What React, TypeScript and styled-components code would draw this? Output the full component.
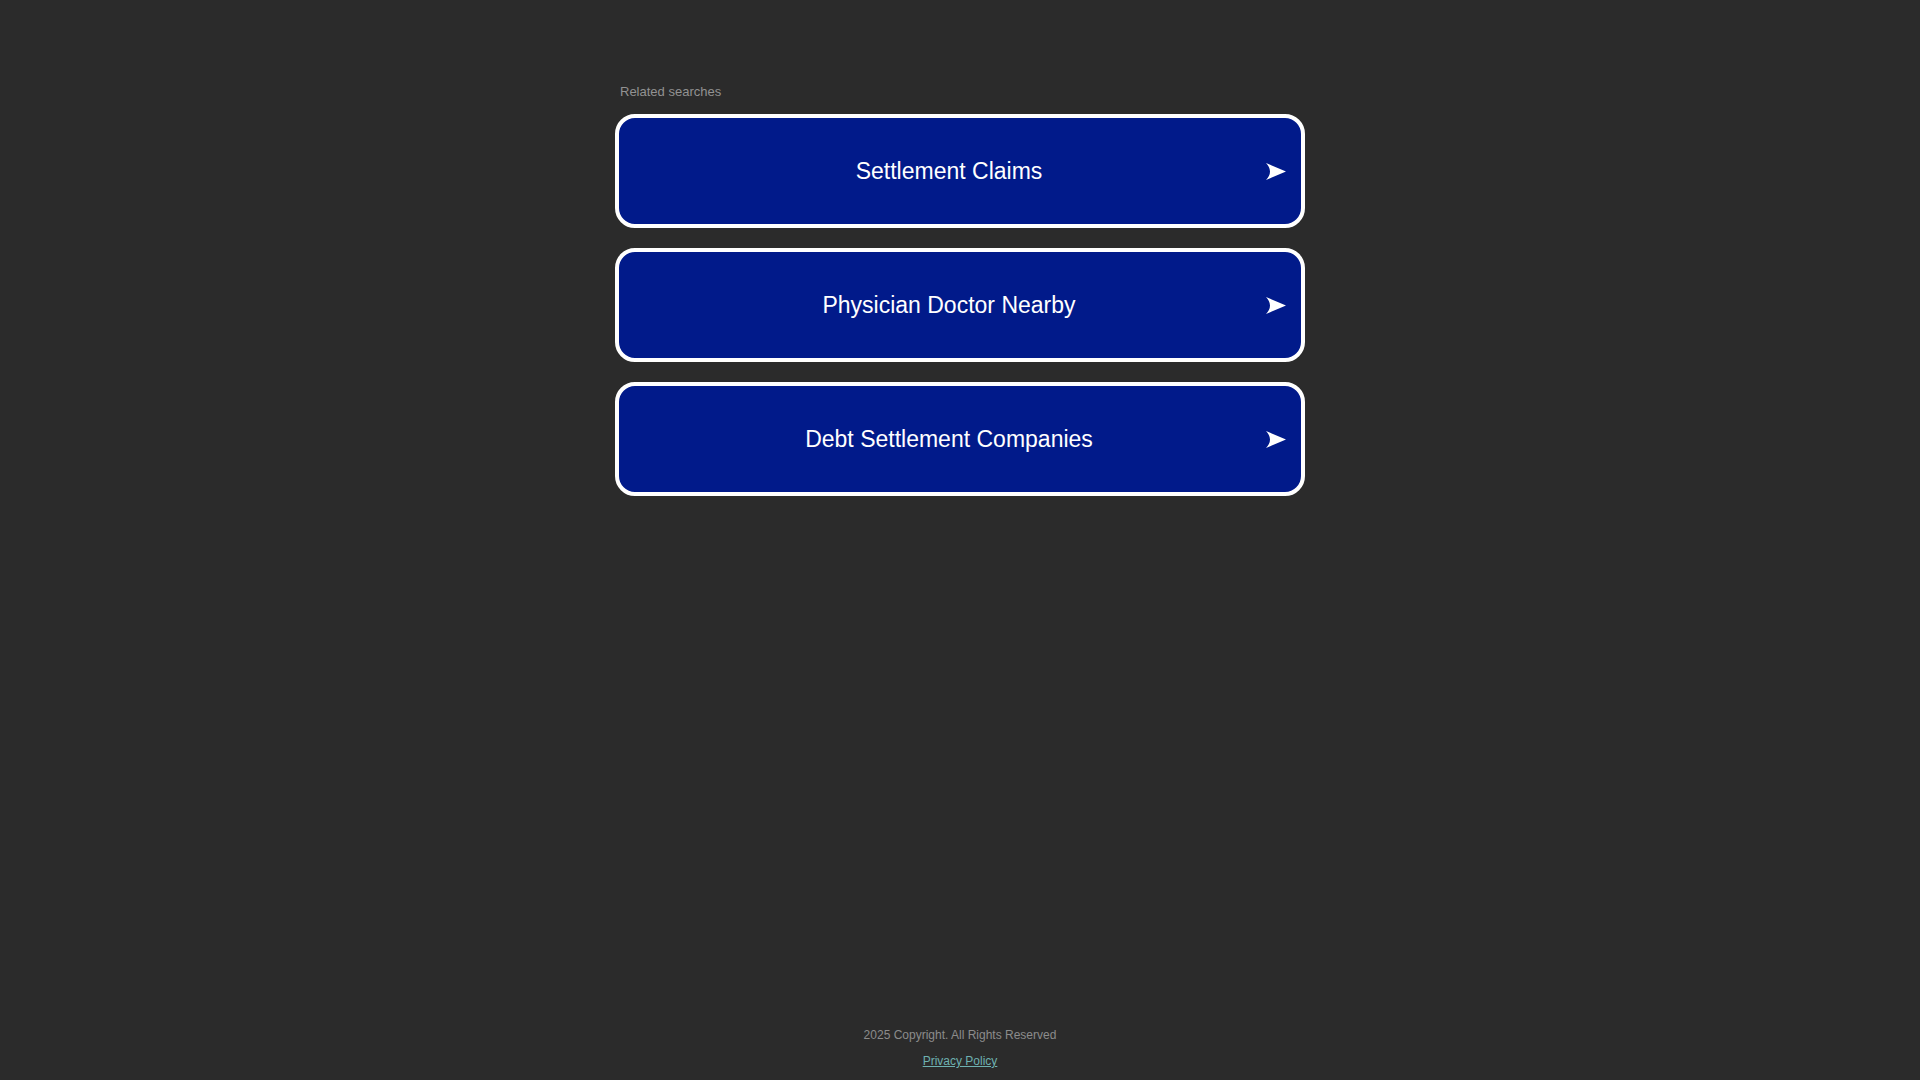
import React from "react";
import styled, { createGlobalStyle } from "styled-components";

const Global = createGlobalStyle`
  html, body { margin: 0; padding: 0; background: #2b2b2b; }
  body { font-family: "Liberation Sans", Arial, sans-serif; }
`;

const Page = styled.div`
  min-height: 100vh;
  display: flex;
  flex-direction: column;
  align-items: center;
`;

const Main = styled.main`
  width: 690px;
  padding-top: 84px;
  display: flex;
  flex-direction: column;
`;

const Heading = styled.div`
  font-size: 13px;
  line-height: 16px;
  color: #929292;
  padding-left: 5px;
  margin-bottom: 14px;
`;

const List = styled.div`
  display: flex;
  flex-direction: column;
  gap: 20px;
`;

const Card = styled.a`
  box-sizing: border-box;
  height: 114px;
  display: flex;
  align-items: center;
  background: #011a8a;
  border: 4px solid #ffffff;
  border-radius: 20px;
  padding: 0 15px 0 13px;
  text-decoration: none;
  cursor: pointer;
`;

const Label = styled.span`
  flex: 1;
  text-align: center;
  color: #ffffff;
  font-size: 23px;
  line-height: 28px;
`;

const Arrow = styled.svg`
  width: 20px;
  height: 17px;
  flex: none;
`;

const Footer = styled.footer`
  margin-top: auto;
  display: flex;
  flex-direction: column;
  align-items: center;
  gap: 10px;
  padding-bottom: 11px;
  font-size: 12px;
  line-height: 16px;
`;

const Copy = styled.div`
  color: #8c8c8c;
`;

const Policy = styled.a`
  color: #6eb1b1;
  text-decoration: underline;
`;

const items = ["Settlement Claims", "Physician Doctor Nearby", "Debt Settlement Companies"];

export default function App() {
  return (
    <>
      <Global />
      <Page>
        <Main>
          <Heading>Related searches</Heading>
          <List>
            {items.map((t) => (
              <Card key={t}>
                <Label>{t}</Label>
                <Arrow viewBox="0 0 20 17">
                  <path d="M0 0 L20 8.5 L0 17 Q8 8.5 0 0 Z" fill="#ffffff" />
                </Arrow>
              </Card>
            ))}
          </List>
        </Main>
        <Footer>
          <Copy>2025 Copyright. All Rights Reserved</Copy>
          <Policy>Privacy Policy</Policy>
        </Footer>
      </Page>
    </>
  );
}
